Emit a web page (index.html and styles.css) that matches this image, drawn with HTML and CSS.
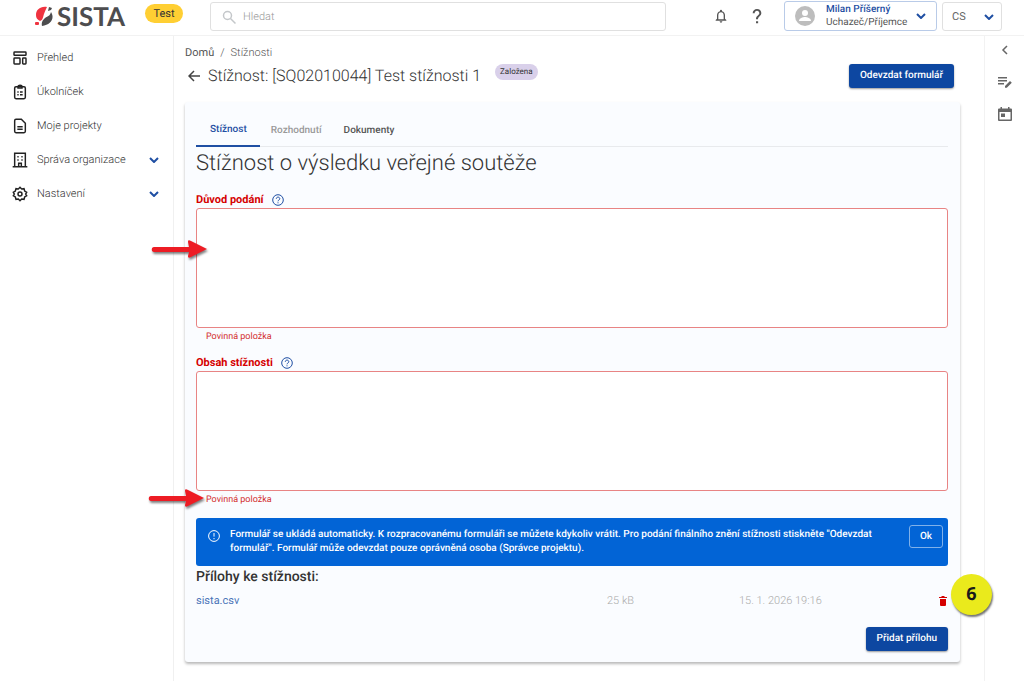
FILE: index.html
```html
<!DOCTYPE html>
<html lang="cs">
<head>
  <meta charset="UTF-8">
  <meta name="viewport" content="width=device-width, initial-scale=1">
  <title>SISTA – Stížnost</title>
  <link rel="stylesheet" href="styles.css">
</head>
<body>
  <header class="topbar">
    <a class="logo" href="#">
      <svg class="logo-mark" viewBox="0 0 18 20" aria-hidden="true">
        <path d="M12 1C5 0 1 4 1 9c0 3 1 4 4 6 3-1 3-4 4-7 1-3 2-5 3-7z" fill="#ef3340"/>
        <rect x="0" y="16" width="4" height="3" rx="1" fill="#ef3340"/>
        <path d="M16 6c4 6 0 13-9 14-1-4 1-6 3-8 3-2 5-2 6-6z" fill="#4d4d4f"/>
        <path d="M13 5l1-4 3 1-1 2z" fill="#4d4d4f"/>
      </svg>
      <span>SISTA</span>
    </a>
    <span class="env">Test</span>
    <div class="search">
      <svg viewBox="0 0 16 16" aria-hidden="true"><circle cx="6.500" cy="6.500" r="4"/><path d="M9.500 9.500l5 5"/></svg>
      <input type="search" placeholder="Hledat" aria-label="Hledat">
    </div>
    <div class="tools">
      <button class="icon-btn" aria-label="Oznámení">
        <svg viewBox="0 0 24 24"><path d="M12 22c1.100 0 2-.9 2-2h-4c0 1.100.9 2 2 2zm6-6v-5c0-3.100-1.600-5.600-4.500-6.300V4a1.500 1.500 0 0 0-3 0v.7C7.600 5.400 6 7.900 6 11v5l-2 2v1h16v-1l-2-2zm-2 1H8v-6c0-2.500 1.500-4.500 4-4.500s4 2 4 4.500v6z"/></svg>
      </button>
      <button class="icon-btn" aria-label="Nápověda">
        <svg viewBox="0 0 24 24"><path d="M10.500 23h3.200v-3.200h-3.200zM12 1.500C8.500 1.500 5.500 4 5.500 7.800h3C8.500 5.900 10 4.300 12 4.300s3.500 1.500 3.500 3.400c0 3.300-5 3.300-5 9.300h3c0-4.200 5-4.900 5-9.500C18.500 4 15.600 1.500 12 1.500z"/></svg>
      </button>
    </div>
    <button class="user">
      <svg class="avatar" viewBox="0 0 20 20" aria-hidden="true"><circle cx="10" cy="10" r="10" fill="#bdbdbd"/><circle cx="10" cy="7" r="3" fill="#fff"/><path d="M4 15c0-3 4-4 6-4s6 1 6 4z" fill="#fff"/></svg>
      <span class="user-text"><strong>Milan Příšerný</strong><span>Uchazeč/Příjemce</span></span>
      <svg class="chevron" viewBox="0 0 10 6" aria-hidden="true"><path d="M1 1l4 4 4-4"/></svg>
    </button>
    <div class="lang">
      <select aria-label="Jazyk">
        <option>CS</option>
        <option>EN</option>
      </select>
      <svg class="chevron" viewBox="0 0 10 6" aria-hidden="true"><path d="M1 1l4 4 4-4"/></svg>
    </div>
  </header>

  <div class="layout">
    <nav class="sidebar">
      <a href="#">
        <svg viewBox="0 0 24 24"><rect x="3" y="3" width="18" height="5" rx="1"/><rect x="3" y="12" width="9" height="9" rx="1"/><rect x="16" y="12" width="5" height="9" rx="1"/></svg>
        <span>Přehled</span>
      </a>
      <a href="#">
        <svg viewBox="0 0 24 24"><rect x="4" y="4" width="16" height="18" rx="2"/><path d="M9 4c0-3 6-3 6 0v2H9zM8 12h2M12 12h4M8 16h2M12 16h4"/></svg>
        <span>Úkolníček</span>
      </a>
      <a href="#">
        <svg viewBox="0 0 24 24"><path d="M6 2h8l6 6v12a2 2 0 0 1-2 2H6a2 2 0 0 1-2-2V4a2 2 0 0 1 2-2zM8 13h8M8 17h8"/></svg>
        <span>Moje projekty</span>
      </a>
      <a href="#">
        <svg viewBox="0 0 24 24"><path d="M1 22h22M4 22V2h16v20M10 22v-5h4v5M8 7h2M14 7h2M8 12h2M14 12h2"/></svg>
        <span>Správa organizace</span>
        <svg class="chevron" viewBox="0 0 10 6" aria-hidden="true"><path d="M1 1l4 4 4-4"/></svg>
      </a>
      <a href="#">
        <svg viewBox="0 0 24 24"><path d="M9.500 4.500L12 2l2.500 2.500 3.500-.5 1 3.500 3 2-1.500 2.500L22 14.500l-3 2-1 3.500-3.500-.5L12 22l-2.500-2.500L6 20l-1-3.500-3-2L3.500 12 2 9.500l3-2L6 4z"/><circle cx="12" cy="12" r="3"/></svg>
        <span>Nastavení</span>
        <svg class="chevron" viewBox="0 0 10 6" aria-hidden="true"><path d="M1 1l4 4 4-4"/></svg>
      </a>
    </nav>

    <main class="main">
      <div class="breadcrumb"><a href="#">Domů</a><span>/</span><span>Stížnosti</span></div>
      <div class="title-row">
        <a class="back" href="#" aria-label="Zpět"><svg viewBox="0 0 12 12"><path d="M12 6H1M6 1L1 6l5 5"/></svg></a>
        <h1>Stížnost: [SQ02010044] Test stížnosti 1</h1>
        <span class="state">Založena</span>
        <button class="btn">Odevzdat formulář</button>
      </div>

      <section class="card">
        <div class="tabs" role="tablist">
          <button class="tab active" role="tab" aria-selected="true">Stížnost</button>
          <button class="tab" role="tab" disabled>Rozhodnutí</button>
          <button class="tab" role="tab">Dokumenty</button>
        </div>
        <h2>Stížnost o výsledku veřejné soutěže</h2>

        <div class="field">
          <div class="field-label">
            <label for="reason">Důvod podání</label>
            <svg viewBox="0 0 12 12" aria-hidden="true"><circle cx="6" cy="6" r="5.300"/><path d="M4.300 4.800c0-2.300 3.500-2.200 3.500 0C7.800 6 6 6 6 7.300M6 8.300v1"/></svg>
          </div>
          <textarea id="reason"></textarea>
          <p class="field-error">Povinná položka</p>
          <svg class="arrow arrow-reason" viewBox="0 0 58 20" aria-hidden="true"><path d="M3 8h35l-1-5c0-2 1-2 3-1l16 8-16 8c-2 1-3 1-3-1l1-4H3c-3 0-3-5 0-5z"/></svg>
        </div>

        <div class="field">
          <div class="field-label">
            <label for="content">Obsah stížnosti</label>
            <svg viewBox="0 0 12 12" aria-hidden="true"><circle cx="6" cy="6" r="5.300"/><path d="M4.300 4.800c0-2.300 3.500-2.200 3.500 0C7.800 6 6 6 6 7.300M6 8.300v1"/></svg>
          </div>
          <textarea id="content"></textarea>
          <p class="field-error">Povinná položka</p>
          <svg class="arrow arrow-content" viewBox="0 0 58 20" aria-hidden="true"><path d="M3 8h35l-1-5c0-2 1-2 3-1l16 8-16 8c-2 1-3 1-3-1l1-4H3c-3 0-3-5 0-5z"/></svg>
        </div>

        <div class="notice">
          <svg viewBox="0 0 12 12" aria-hidden="true"><circle cx="6" cy="6" r="5.400"/><path d="M6 3v3.600M6 8v1.200"/></svg>
          <p>Formulář se ukládá automaticky. K rozpracovanému formuláři se můžete kdykoliv vrátit. Pro podání finálního znění stížnosti stiskněte "Odevzdat formulář". Formulář může odevzdat pouze oprávněná osoba (Správce projektu).</p>
          <button>Ok</button>
        </div>

        <h3>Přílohy ke stížnosti:</h3>
        <div class="file-row">
          <a href="#">sista.csv</a>
          <span>25 kB</span>
          <span>15. 1. 2026 19:16</span>
          <button class="delete" aria-label="Smazat"><svg viewBox="0 0 8 10"><path d="M1 3h6v6a1 1 0 0 1-1 1H2a1 1 0 0 1-1-1zM0 1h2l1-1h2l1 1h2v1H0z"/></svg></button>
          <span class="step">6</span>
        </div>
        <div class="actions">
          <button class="btn">Přidat přílohu</button>
        </div>
      </section>
    </main>

    <aside class="rail">
      <button aria-label="Rozbalit"><svg viewBox="0 0 16 16"><path d="M10 4L6 8l4 4" fill="none" stroke="#666" stroke-width="1.500"/></svg></button>
      <button aria-label="Poznámky"><svg viewBox="0 0 16 16"><path d="M1 3h9v1.500H1zM1 6h9v1.500H1zM1 9h6v1.500H1zM8 12l5-5 1.800 1.800-5 5H8z" fill="#666"/></svg></button>
      <button aria-label="Kalendář"><svg viewBox="0 0 16 16"><path d="M3.500 1H5v1.500h6V1h1.500v1.500H14a1 1 0 0 1 1 1V14a1 1 0 0 1-1 1H2a1 1 0 0 1-1-1V3.500a1 1 0 0 1 1-1h1.500zM2.500 6v7.500h11V6zM4 7.500h4v3.500H4z" fill="#666" fill-rule="evenodd"/></svg></button>
    </aside>
  </div>
</body>
</html>
```
FILE: styles.css
```css
* {
  box-sizing: border-box;
}
body {
  margin: 0;
  min-height: 100vh;
  display: flex;
  flex-direction: column;
  font-family: Roboto, Arial, sans-serif;
  font-size: 11px;
  line-height: 16px;
  text-rendering: geometricPrecision;
  color: #333;
  background: #fff;
}
button, input, select, textarea {
  font: inherit;
  color: inherit;
  text-rendering: inherit;
}
button {
  padding: 0;
  border: 0;
  background: none;
  cursor: pointer;
}
a {
  color: inherit;
  text-decoration: none;
}
h1, h2, h3, p {
  margin: 0;
}
svg {
  flex: none;
}
.chevron {
  width: 10px;
  height: 6px;
  fill: none;
  stroke: #1f4fa3;
  stroke-width: 2;
}

/* top bar */
.topbar {
  display: flex;
  align-items: flex-start;
  height: 36px;
  padding: 1px 22px 0 35px;
  border-bottom: 1px solid #f2f2f2;
}
.logo {
  display: flex;
  align-items: center;
  gap: 4px;
  width: 110px;
  height: 30px;
  font-family: Lato, sans-serif;
  font-size: 26px;
  font-weight: 700;
  color: #4d4d4f;
}
.logo-mark {
  width: 18px;
  height: 20px;
}
.env {
  width: 38px;
  margin-top: 3px;
  border-radius: 10px;
  line-height: 19px;
  text-align: center;
  background: #ffcf33;
}
.search {
  display: flex;
  align-items: center;
  gap: 6px;
  flex: 0 1 456px;
  height: 29px;
  margin: 1px auto 0 27px;
  padding: 0 10px;
  border: 1px solid #e0e0e0;
  border-radius: 3px;
}
.search svg {
  width: 16px;
  height: 16px;
  fill: none;
  stroke: #c4c7ca;
  stroke-width: 1.5;
}
.search input {
  flex: 1;
  min-width: 0;
  border: 0;
  outline: 0;
  padding: 0;
  font-weight: 300;
  background: none;
}
.search input::placeholder {
  color: #999;
}
.tools {
  display: flex;
  gap: 20px;
  margin: 7px 19px 0 19px;
}
.icon-btn, .icon-btn svg {
  display: block;
  width: 16px;
  height: 16px;
  fill: #555;
}
.user {
  display: flex;
  align-items: center;
  gap: 11px;
  height: 30px;
  width: 153px;
  padding: 0 10px;
  border: 1px solid #b9cbe8;
  border-radius: 3px;
  font-size: 10px;
  line-height: 13px;
  text-align: left;
  white-space: nowrap;
}
.avatar {
  width: 20px;
  height: 20px;
}
.user-text {
  flex: 1;
  min-width: 0;
}
.user-text strong {
  display: block;
  font-weight: 500;
  color: #1f4fa3;
}
.user-text span {
  color: #555;
}
.lang {
  display: flex;
  align-items: center;
  position: relative;
  width: 60px;
  height: 29px;
  margin: 1px 0 0 5px;
  border: 1px solid #e0e0e0;
  border-radius: 3px;
}
.lang select {
  appearance: none;
  width: 100%;
  height: 100%;
  padding: 0 9px;
  border: 0;
  color: #666;
  background: none;
}
.lang .chevron {
  position: absolute;
  right: 7px;
  pointer-events: none;
}

/* page columns */
.layout {
  display: flex;
  flex: 1;
}
.sidebar {
  flex: none;
  width: 174px;
  padding-top: 5px;
  border-right: 1px solid #f0f0f0;
}
.sidebar a {
  display: flex;
  align-items: center;
  gap: 9px;
  height: 34px;
  padding: 0 14px 0 12px;
  font-weight: 300;
}
.sidebar a svg:first-child {
  width: 16px;
  height: 16px;
  fill: none;
  stroke: #222;
  stroke-width: 2.2;
}
.sidebar .chevron {
  margin-left: auto;
}
.rail {
  display: flex;
  flex-direction: column;
  align-items: center;
  gap: 16px;
  flex: none;
  width: 40px;
  padding-top: 6px;
  border-left: 1px solid #f2f2f2;
}
.rail button, .rail svg {
  display: block;
  width: 16px;
  height: 16px;
}
.main {
  flex: 1;
  min-width: 0;
  padding: 9px 24px 20px 11px;
}
.breadcrumb {
  display: flex;
  gap: 6px;
  color: #555;
}
.breadcrumb span {
  font-weight: 300;
}
.title-row {
  display: flex;
  align-items: center;
  margin-top: 3px;
  padding: 0 6px 0 3px;
}
.back {
  margin-right: 8px;
}
.back svg {
  display: block;
  width: 12px;
  height: 12px;
  fill: none;
  stroke: #444;
  stroke-width: 1.5;
}
h1 {
  font-size: 16px;
  font-weight: 300;
  line-height: 24px;
}
.state {
  align-self: flex-start;
  margin: 0 auto 0 14px;
  padding: 0 5px;
  border-radius: 8px;
  font-size: 8px;
  background: #d9d0ea;
}
.btn {
  height: 24px;
  padding: 0 11px;
  border-radius: 3px;
  font-size: 10px;
  font-weight: 500;
  color: #fff;
  background: #0d47a1;
  box-shadow: 0 1px 2px rgba(0, 0, 0, 0.4);
}

/* form card */
.card {
  margin-top: 14px;
  padding: 11px 12px 11px 11px;
  border-radius: 3px;
  background: #fafcff;
  box-shadow: 0 2px 3px rgba(0, 0, 0, 0.28);
}
.tabs {
  display: flex;
  border-bottom: 1px solid #e8eaed;
}
.tab {
  height: 34px;
  margin-bottom: -1px;
  padding: 2px 11px 0;
  font-size: 10px;
  font-weight: 500;
  color: #555;
}
.tab:disabled {
  color: #999;
}
.tab.active {
  padding: 2px 13px 0 14px;
  color: #1f4fa3;
  border-bottom: 2px solid #1f4fa3;
}
h2 {
  margin-bottom: 11px;
  font-size: 22px;
  font-weight: 300;
  line-height: 34px;
}
.field {
  position: relative;
  margin-bottom: 10px;
}
.field-label {
  display: flex;
  align-items: center;
  gap: 8px;
  font-weight: 700;
  color: #d50000;
}
.field-label svg {
  width: 12px;
  height: 12px;
  fill: none;
  stroke: #1f4fa3;
}
.field textarea {
  display: block;
  width: 100%;
  height: 120px;
  padding: 8px;
  border: 1px solid #e88484;
  border-radius: 3px;
  outline: 0;
  resize: none;
  background: #fff;
}
.field-error {
  padding: 1px 0 0 10px;
  font-size: 9px;
  color: #d32f2f;
}
.arrow {
  position: absolute;
  width: 58px;
  height: 20px;
  fill: #ed1c24;
  filter: drop-shadow(1px 2px 1px rgba(0, 0, 0, 0.5));
}
.arrow-reason {
  left: -45px;
  top: 47px;
}
.arrow-content {
  left: -48px;
  bottom: 0;
}
.notice {
  display: flex;
  align-items: flex-start;
  gap: 10px;
  padding: 10px 5px 10px 12px;
  border-radius: 3px;
  font-size: 10px;
  font-weight: 500;
  line-height: 14px;
  color: #fff;
  background: #0264d6;
}
.notice svg {
  width: 12px;
  height: 12px;
  margin-top: 2px;
  fill: none;
  stroke: #fff;
}
.notice p {
  flex: 1;
}
.notice button {
  width: 34px;
  height: 23px;
  margin: -3px 0 0 16px;
  border: 1px solid #80b1ea;
  border-radius: 3px;
}
h3 {
  font-size: 14px;
  font-weight: 500;
  line-height: 22px;
}
.file-row {
  display: grid;
  grid-template-columns: 411fr 132fr 198fr 11px;
  align-items: center;
  position: relative;
  height: 26px;
  margin-bottom: 13px;
  font-weight: 300;
  color: #aaa;
}
.file-row a {
  font-weight: 400;
  color: #4a74b8;
}
.delete svg {
  display: block;
  width: 8px;
  height: 10px;
  margin: 0 auto;
  fill: #d50000;
}
.step {
  position: absolute;
  right: -44px;
  top: -14px;
  width: 41px;
  height: 41px;
  border-radius: 50%;
  font-family: "Open Sans", sans-serif;
  font-size: 18px;
  font-weight: 700;
  line-height: 41px;
  text-align: center;
  color: #1a1a1a;
  background: #eaea1c;
  box-shadow: 1px 2px 2px rgba(0, 0, 0, 0.55);
}
.actions {
  display: flex;
  justify-content: flex-end;
}
```
